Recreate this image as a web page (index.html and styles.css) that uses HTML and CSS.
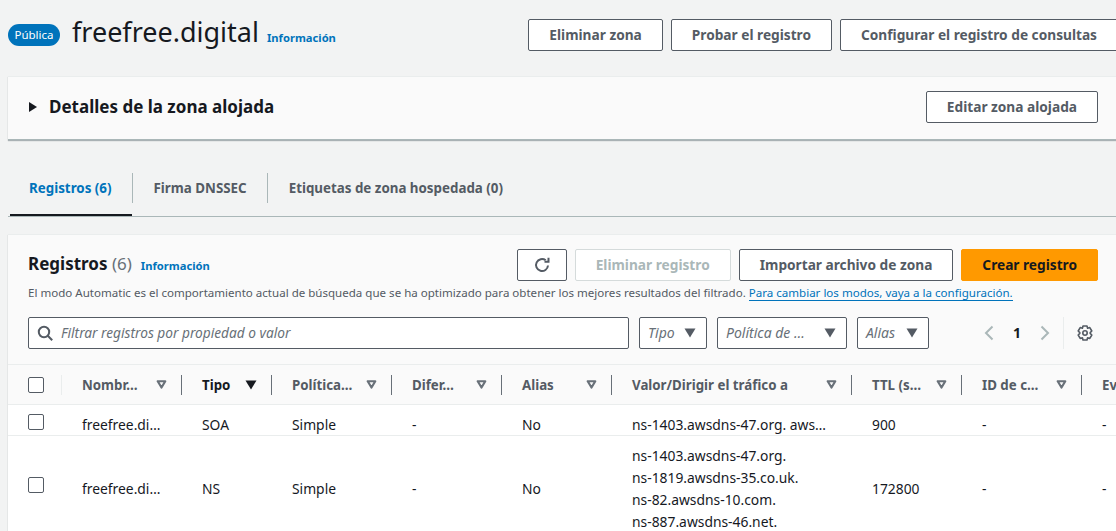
FILE: index.html
```html
<!DOCTYPE html>
<html lang="es">
<head>
  <meta charset="UTF-8">
  <title>freefree.digital</title>
  <link rel="stylesheet" href="styles.css">
</head>
<body>
  <svg class="defs" width="0" height="0">
    <symbol id="sort" viewBox="0 0 12 10"><path d="M1.800 1.400h8.400L6 8.400z" fill="none" stroke="currentColor" stroke-width="2.400" stroke-linejoin="round"/></symbol>
    <symbol id="sort-on" viewBox="0 0 12 10"><path d="M.5.5h11L6 9.500z" fill="currentColor"/></symbol>
    <symbol id="caret" viewBox="0 0 12 10"><path d="M.5.5h11L6 9.500z" fill="currentColor"/></symbol>
  </svg>

  <div class="page">
    <header class="page-header">
      <span class="badge">Pública</span>
      <h1>freefree.digital</h1>
      <a class="info" href="#">Información</a>
      <div class="header-actions">
        <button class="btn">Eliminar zona</button>
        <button class="btn">Probar el registro</button>
        <button class="btn">Configurar el registro de consultas</button>
      </div>
    </header>

    <section class="details">
      <span class="arrow"></span>
      <h2>Detalles de la zona alojada</h2>
      <button class="btn">Editar zona alojada</button>
    </section>

    <nav class="tabs">
      <a class="tab active" href="#">Registros (6)</a>
      <a class="tab" href="#">Firma DNSSEC</a>
      <a class="tab" href="#">Etiquetas de zona hospedada (0)</a>
    </nav>

    <section class="records">
      <div class="records-top">
        <div class="records-head">
          <div class="records-title">
            <h2>Registros <span class="count">(6)</span></h2>
            <a class="info" href="#">Información</a>
          </div>
          <div class="records-actions">
            <button class="btn btn-icon" aria-label="Actualizar">
              <svg width="16" height="16" viewBox="0 0 16 16" fill="none" stroke="currentColor" stroke-width="2"><path d="M14 8.500a6 6 0 1 1-2.300-5.200"/><path d="M14.500 .8v4h-4"/></svg>
            </button>
            <button class="btn btn-disabled">Eliminar registro</button>
            <button class="btn">Importar archivo de zona</button>
            <button class="btn btn-primary">Crear registro</button>
          </div>
        </div>
        <p class="records-note">El modo Automatic es el comportamiento actual de búsqueda que se ha optimizado para obtener los mejores resultados del filtrado. <a href="#">Para cambiar los modos, vaya a la configuración.</a></p>

        <div class="filters">
          <div class="search">
            <svg width="16" height="16" viewBox="0 0 16 16" fill="none" stroke="currentColor" stroke-width="2"><circle cx="7" cy="7" r="5.200"/><path d="M10.800 10.800l4.400 4.400"/></svg>
            <span>Filtrar registros por propiedad o valor</span>
          </div>
          <div class="select select-type"><span>Tipo</span><svg width="12" height="10"><use href="#caret"/></svg></div>
          <div class="select select-policy"><span>Política de …</span><svg width="12" height="10"><use href="#caret"/></svg></div>
          <div class="select select-alias"><span>Alias</span><svg width="12" height="10"><use href="#caret"/></svg></div>
          <div class="pager">
            <svg class="chev" width="10" height="16" viewBox="0 0 10 16" fill="none" stroke="currentColor" stroke-width="2"><path d="M8.500 1.500L2 8l6.500 6.500"/></svg>
            <span class="page-num">1</span>
            <svg class="chev" width="10" height="16" viewBox="0 0 10 16" fill="none" stroke="currentColor" stroke-width="2"><path d="M1.500 1.500L8 8l-6.500 6.500"/></svg>
          </div>
          <button class="gear" aria-label="Preferencias">
            <svg width="16" height="16" viewBox="0 0 16 16" fill="none" stroke="currentColor" stroke-width="1.600" stroke-linejoin="round"><circle cx="8" cy="8" r="2.200"/><path d="M6 1h4l.6 2.200 2.200-.6 2 3.400-1.600 1.600v.8l1.600 1.600-2 3.400-2.200-.6L10 15H6l-.6-2.200-2.200.6-2-3.400 1.600-1.600v-.8L1.200 6l2-3.400 2.200.6z"/></svg>
          </button>
        </div>
      </div>

      <table class="grid">
        <colgroup>
          <col class="c-check"><col class="c-name"><col class="c-type"><col class="c-policy"><col class="c-diff"><col class="c-alias"><col class="c-value"><col class="c-ttl"><col class="c-id"><col class="c-ev">
        </colgroup>
        <thead>
          <tr>
            <th class="cell-check"><span class="check"></span></th>
            <th><div class="th-in"><span>Nombr…</span><svg class="sort" width="11" height="9"><use href="#sort"/></svg></div></th>
            <th class="sorted"><div class="th-in"><span>Tipo</span><svg width="12" height="10"><use href="#sort-on"/></svg></div></th>
            <th><div class="th-in"><span>Política…</span><svg class="sort" width="11" height="9"><use href="#sort"/></svg></div></th>
            <th><div class="th-in"><span>Difer…</span><svg class="sort" width="11" height="9"><use href="#sort"/></svg></div></th>
            <th><div class="th-in"><span>Alias</span><svg class="sort" width="11" height="9"><use href="#sort"/></svg></div></th>
            <th><div class="th-in"><span>Valor/Dirigir el tráfico a</span><svg class="sort" width="11" height="9"><use href="#sort"/></svg></div></th>
            <th><div class="th-in"><span>TTL (s…</span><svg class="sort" width="11" height="9"><use href="#sort"/></svg></div></th>
            <th><div class="th-in"><span>ID de c…</span><svg class="sort" width="11" height="9"><use href="#sort"/></svg></div></th>
            <th><div class="th-in"><span>Ev</span></div></th>
          </tr>
        </thead>
        <tbody>
          <tr class="row-short">
            <td class="cell-check"><span class="check"></span></td>
            <td>freefree.di…</td><td>SOA</td><td>Simple</td><td>-</td><td>No</td>
            <td>ns-1403.awsdns-47.org. aws…</td><td>900</td><td>-</td><td>-</td>
          </tr>
          <tr class="row-tall">
            <td class="cell-check"><span class="check"></span></td>
            <td>freefree.di…</td><td>NS</td><td>Simple</td><td>-</td><td>No</td>
            <td>ns-1403.awsdns-47.org.<br>ns-1819.awsdns-35.co.uk.<br>ns-82.awsdns-10.com.<br>ns-887.awsdns-46.net.</td><td>172800</td><td>-</td><td>-</td>
          </tr>
        </tbody>
      </table>
    </section>
  </div>
</body>
</html>
```

FILE: styles.css
```css
html, body {
  margin: 0;
  height: 531px;
  overflow: hidden;
}
body {
  background-color: #f2f3f3;
  color: #16191f;
  font-family: "Noto Sans", Arial, sans-serif;
  font-size: 14px;
  line-height: 22px;
}
.defs {
  display: block;
}
.page {
  width: 1110px;
  margin-left: 8px;
  padding-top: 19px;
}
a {
  color: #0073bb;
  text-decoration: none;
}
h1, h2, p {
  margin: 0;
}

/* buttons */
.btn {
  height: 32px;
  padding: 0 20px;
  background-color: #fff;
  border: 1px solid #545b64;
  border-radius: 2px;
  color: #545b64;
  font: bold 13.700px/20px "Noto Sans", Arial, sans-serif;
  white-space: nowrap;
}
.btn-icon {
  width: 50px;
  padding: 0;
}
.btn-icon svg {
  display: block;
  margin: 0 auto;
}
.btn-disabled {
  border-color: #d5dbdb;
  color: #aab7b8;
}
.btn-primary {
  background-color: #f90;
  border-color: #f90;
  color: #16191f;
}

/* page header */
.page-header {
  display: flex;
  align-items: center;
  height: 32px;
}
.badge {
  width: 52px;
  height: 22px;
  background-color: #0073bb;
  border-radius: 11px;
  color: #fff;
  font-size: 11.500px;
  line-height: 22px;
  text-align: center;
}
.page-header h1 {
  margin: 0 0 6px 12px;
  font-size: 27px;
  font-weight: 400;
  line-height: 32px;
}
.info {
  font-size: 11.200px;
  font-weight: 700;
}
.page-header .info {
  margin-left: 8px;
  margin-top: 5px;
}
.header-actions {
  display: flex;
  gap: 8px;
  margin-left: auto;
}

/* details */
.details {
  display: flex;
  align-items: center;
  height: 60px;
  margin-top: 25px;
  padding: 0 20px 2px 21px;
  background-color: #fafafa;
  border-top: 1px solid #eaeded;
  border-bottom: 1px solid #aab7b8;
  box-shadow: 0 1px 1px rgba(0, 28, 36, 0.3);
}
.arrow {
  width: 0;
  height: 0;
  border-left: 8px solid #16191f;
  border-top: 5px solid transparent;
  border-bottom: 5px solid transparent;
}
.details h2 {
  margin-left: 12px;
  font-size: 17px;
  font-weight: 700;
}
.details .btn {
  margin-left: auto;
}

/* tabs */
.tabs {
  display: flex;
  height: 46px;
  margin-top: 30px;
  padding-left: 2px;
  border-bottom: 1px solid #aab7b8;
}
.tab {
  position: relative;
  display: flex;
  align-items: center;
  height: 36px;
  padding: 0 20px 10px 22px;
  color: #545b64;
  font-size: 13.350px;
  font-weight: 700;
}
.tab + .tab::before {
  content: "";
  position: absolute;
  left: 0;
  top: 3px;
  height: 30px;
  border-left: 1px solid #aab7b8;
}
.tab.active {
  padding-left: 19px;
  color: #0073bb;
  box-shadow: inset 0 -2px 0 #16191f;
}

/* records card */
.records {
  margin-top: 17px;
  background-color: #fff;
  border-top: 1px solid #eaeded;
  box-shadow: 0 1px 1px rgba(0, 28, 36, 0.3);
}
.records-top {
  padding: 14px 20px 15px;
  background-color: #fafafa;
}
.records-head {
  display: flex;
  align-items: center;
  height: 32px;
}
.records-title {
  display: flex;
  align-items: center;
  gap: 9px;
}
.records-title h2 {
  margin-bottom: 3px;
  font-size: 17px;
  font-weight: 700;
}
.records-title .info {
  margin-top: 2px;
}
.count {
  color: #687078;
  font-weight: 400;
}
.records-actions {
  display: flex;
  gap: 8px;
  margin-left: auto;
}
.records-note {
  margin-top: 1px;
  color: #545b64;
  font-size: 11.560px;
  line-height: 22px;
  white-space: nowrap;
}
.records-note a {
  border-bottom: 1px solid #0073bb;
}

/* filters */
.filters {
  display: flex;
  align-items: center;
  margin-top: 13px;
}
.search, .select {
  display: flex;
  align-items: center;
  height: 32px;
  background-color: #fff;
  border: 1px solid #545b64;
  border-radius: 2px;
  box-sizing: border-box;
  color: #687078;
  font-size: 14px;
  font-style: italic;
}
.search {
  width: 601px;
  padding-left: 8px;
  gap: 8px;
  font-size: 13.700px;
}
.search svg, .select svg {
  color: #545b64;
}
.select {
  justify-content: space-between;
  margin-left: 10px;
  padding: 0 10px 0 8px;
}
.select-type {
  width: 68px;
}
.select-policy {
  width: 130px;
}
.select-alias {
  width: 72px;
}
.pager {
  display: flex;
  align-items: center;
  margin-left: 55px;
  height: 32px;
}
.chev {
  color: #aab7b8;
}
.page-num {
  width: 46px;
  font-weight: 700;
  text-align: center;
}
.gear {
  display: flex;
  align-items: center;
  height: 32px;
  margin-left: 13px;
  padding: 0 0 0 13px;
  background: none;
  border: 0;
  border-left: 1px solid #eaeded;
  color: #545b64;
}

/* table */
.grid {
  width: 1110px;
  border-collapse: collapse;
  table-layout: fixed;
}
.c-check { width: 53px; }
.c-name { width: 120px; }
.c-type { width: 90px; }
.c-policy { width: 120px; }
.c-diff { width: 110px; }
.c-alias { width: 110px; }
.c-value { width: 240px; }
.c-ttl { width: 110px; }
.c-id { width: 120px; }
.c-ev { width: 37px; }
.grid th {
  height: 39px;
  padding: 0;
  background-color: #fafafa;
  border-top: 1px solid #eaeded;
  border-bottom: 1px solid #eaeded;
  color: #545b64;
  font-size: 13.300px;
  font-weight: 700;
  text-align: left;
}
.grid th.sorted {
  color: #16191f;
}
.sort {
  color: #687078;
}
.th-in {
  display: flex;
  align-items: center;
  justify-content: space-between;
  height: 20px;
  padding: 0 14px 0 20px;
  border-left: 1px solid #687078;
  white-space: nowrap;
}
.grid th.cell-check + th .th-in {
  border-left-color: #eaeded;
}
.grid td {
  padding: 9px 0 9px 21px;
  border-bottom: 1px solid #eaeded;
  font-size: 13.850px;
  line-height: 22px;
  vertical-align: middle;
  white-space: nowrap;
}
.row-short td {
  padding-bottom: 0;
  line-height: 21px;
}
.grid td.cell-check, .grid th.cell-check {
  padding: 0 0 0 20px;
  text-align: left;
}
.grid .row-short td.cell-check {
  padding-top: 9px;
  vertical-align: top;
}
.row-tall .check {
  position: relative;
  top: -4px;
}
.check {
  display: block;
  width: 14px;
  height: 14px;
  background-color: #fff;
  border: 1px solid #545b64;
  border-radius: 2px;
}
```
